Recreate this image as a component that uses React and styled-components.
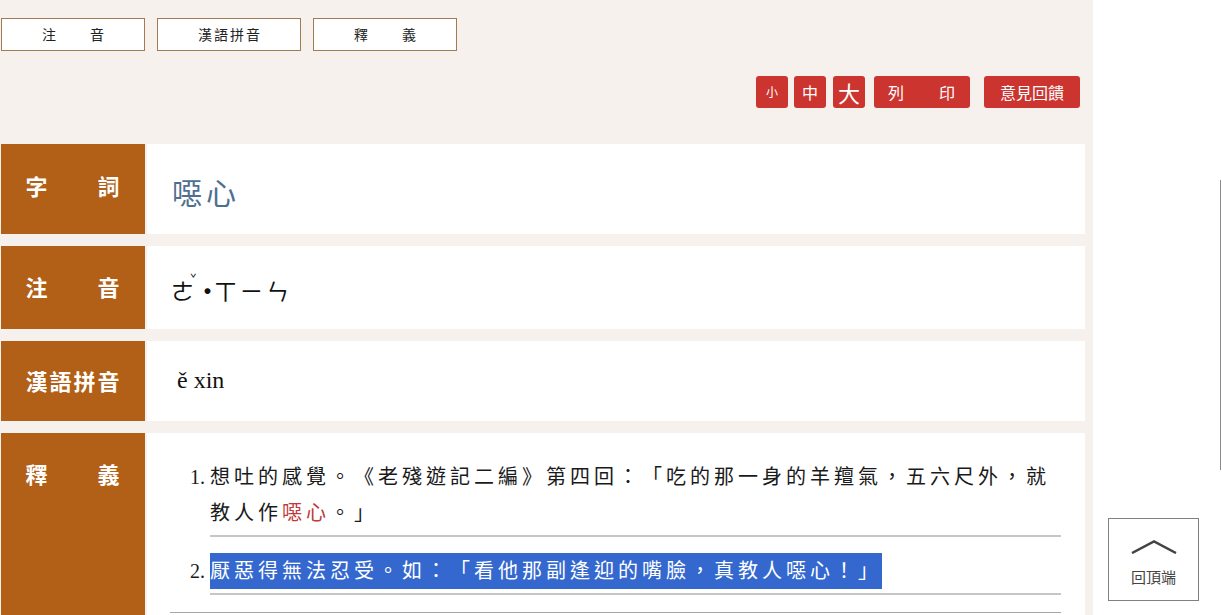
import React from "react";
import styled, { createGlobalStyle } from "styled-components";

const Global = createGlobalStyle`
  html, body {
    margin: 0;
    padding: 0;
    overflow: hidden;
    background: #ffffff;
  }
  body {
    font-family: "Noto Sans CJK TC", "Noto Sans", sans-serif;
    color: #222;
    text-spacing-trim: space-all;
  }
`;

const Page = styled.div`
  display: flex;
  height: 615px;
  overflow: hidden;
`;

const Main = styled.main`
  width: 1093px;
  flex: none;
  box-sizing: border-box;
  background: #f6f1ed;
  padding: 18px 13px 0 1px;
`;

const Side = styled.aside`
  flex: 1;
  background: #ffffff;
`;

const TopNav = styled.nav`
  display: flex;
  gap: 12px;
`;

const NavButton = styled.div`
  width: 144px;
  height: 33px;
  box-sizing: border-box;
  border: 1px solid #a47a55;
  background: #fff;
  display: flex;
  align-items: center;
  justify-content: center;
  font-size: 14px;
  letter-spacing: 2px;
  padding: 0 0 2px 2px;
  color: #222;
`;

const Toolbar = styled.div`
  display: flex;
  justify-content: flex-end;
  margin-top: 25px;
`;

const ToolButton = styled.div`
  width: ${(p) => p.$w}px;
  height: 32px;
  margin-left: ${(p) => p.$ml}px;
  border-radius: 3px;
  background: #cc3430;
  color: #fff;
  display: flex;
  align-items: center;
  justify-content: center;
  font-size: ${(p) => p.$fs}px;
  letter-spacing: ${(p) => p.$ls || 0}px;
  line-height: 1;
`;

const Table = styled.section`
  margin-top: 36px;
  display: flex;
  flex-direction: column;
  gap: 12px;
`;

const Row = styled.div`
  display: flex;
  gap: 2px;
  width: 1084px;
`;

const Label = styled.div`
  width: 144px;
  flex: none;
  box-sizing: border-box;
  background: #b25f18;
  color: #fff;
  font-weight: 700;
  font-size: 22px;
  line-height: 26px;
  letter-spacing: 2px;
  text-align: center;
  padding: ${(p) => p.$pt}px 0 0 1px;
`;

const Cell = styled.div`
  flex: 1;
  background: #fff;
  box-sizing: border-box;
  padding: ${(p) => p.$pad};
`;

const Word = styled.div`
  font-size: 30px;
  line-height: 36px;
  letter-spacing: 4px;
  color: #4f6f90;
`;

const Zhuyin = styled.div`
  font-size: 23px;
  line-height: 30px;
  color: #111;
  display: flex;
  align-items: center;
`;

const Syllable = styled.span`
  letter-spacing: ${(p) => p.$ls}px;
`;

const Tone = styled.span`
  display: inline-block;
  width: 6px;
  font-size: 11px;
  line-height: 1;
  align-self: flex-start;
  margin-top: -2px;
`;

const Dot = styled.span`
  display: inline-block;
  width: 18px;
  text-align: center;
  font-weight: 700;
`;

const Pinyin = styled.div`
  font-family: "Liberation Serif", "Times New Roman", serif;
  font-size: 24px;
  line-height: 30px;
  color: #111;
`;

const DefList = styled.ol`
  margin: 0 0 17px 0;
  padding: 0 0 0 40px;
`;

const DefItem = styled.li`
  font-family: "Liberation Serif", "Noto Sans CJK TC", serif;
  font-size: 20px;
  line-height: 36px;
  letter-spacing: 4px;
  color: #1a1a1a;
  padding-bottom: 4px;
  border-bottom: 2px solid #c6c6c6;
  margin-bottom: ${(p) => p.$mb}px;
  &::marker {
    letter-spacing: 0;
  }
`;

const Hl = styled.span`
  color: #c0393b;
`;

const Selected = styled.span`
  background: #3468cf;
  color: #fff;
  padding: 7px 0;
`;

const Divider = styled.div`
  height: 1px;
  background: #a6a6a6;
`;

const BackTop = styled.div`
  position: fixed;
  left: 1108px;
  top: 518px;
  width: 91px;
  height: 83px;
  box-sizing: border-box;
  border: 1px solid #808080;
  background: #fff;
  display: flex;
  flex-direction: column;
  align-items: center;
  padding-top: 21px;
  gap: 14px;
  font-size: 15px;
  line-height: 18px;
  color: #444;
`;

const ScrollEdge = styled.div`
  position: fixed;
  left: 1220px;
  top: 180px;
  width: 1px;
  height: 290px;
  background: #8c8c8c;
`;

export default function App() {
  return (
    <>
      <Global />
      <Page>
        <Main>
          <TopNav>
            <NavButton>注　　音</NavButton>
            <NavButton>漢語拼音</NavButton>
            <NavButton>釋　　義</NavButton>
          </TopNav>
          <Toolbar>
            <ToolButton $w={32} $fs={12} $ml={0}>小</ToolButton>
            <ToolButton $w={32} $fs={16} $ml={6}>中</ToolButton>
            <ToolButton $w={32} $fs={22} $ml={7}>大</ToolButton>
            <ToolButton $w={96} $fs={16} $ml={9} $ls={1}>列　　印</ToolButton>
            <ToolButton $w={96} $fs={16} $ml={14}>意見回饋</ToolButton>
          </Toolbar>
          <Table>
            <Row>
              <Label $pt={28}>字　　詞</Label>
              <Cell $pad="29px 24px 25px 25px">
                <Word>噁心</Word>
              </Cell>
            </Row>
            <Row>
              <Label $pt={27}>注　　音</Label>
              <Cell $pad="29px 24px 24px 24px">
                <Zhuyin>
                  <Syllable $ls={-4}>ㄜ</Syllable>
                  <Tone>ˇ</Tone>
                  <Dot>·</Dot>
                  <Syllable $ls={3}>ㄒㄧㄣ</Syllable>
                </Zhuyin>
              </Cell>
            </Row>
            <Row>
              <Label $pt={26}>漢語拼音</Label>
              <Cell $pad="24px 24px 26px 30px">
                <Pinyin>ě xin</Pinyin>
              </Cell>
            </Row>
            <Row>
              <Label $pt={27}>釋　　義</Label>
              <Cell $pad="26px 24px 40px 23px">
                <DefList>
                  <DefItem $mb={16}>
                    想吐的感覺。《老殘遊記二編》第四回：「吃的那一身的羊羶氣，五六尺外，就教人作<Hl>噁心</Hl>。」
                  </DefItem>
                  <DefItem $mb={0}>
                    <Selected>厭惡得無法忍受。如：「看他那副逢迎的嘴臉，真教人噁心！」</Selected>
                  </DefItem>
                </DefList>
                <Divider />
              </Cell>
            </Row>
          </Table>
        </Main>
        <Side />
      </Page>
      <ScrollEdge />
      <BackTop>
        <svg width="46" height="14" viewBox="0 0 46 14">
          <polyline points="1,13 23,1.5 45,13" fill="none" stroke="#444" strokeWidth="2.5" />
        </svg>
        <span>回頂端</span>
      </BackTop>
    </>
  );
}
